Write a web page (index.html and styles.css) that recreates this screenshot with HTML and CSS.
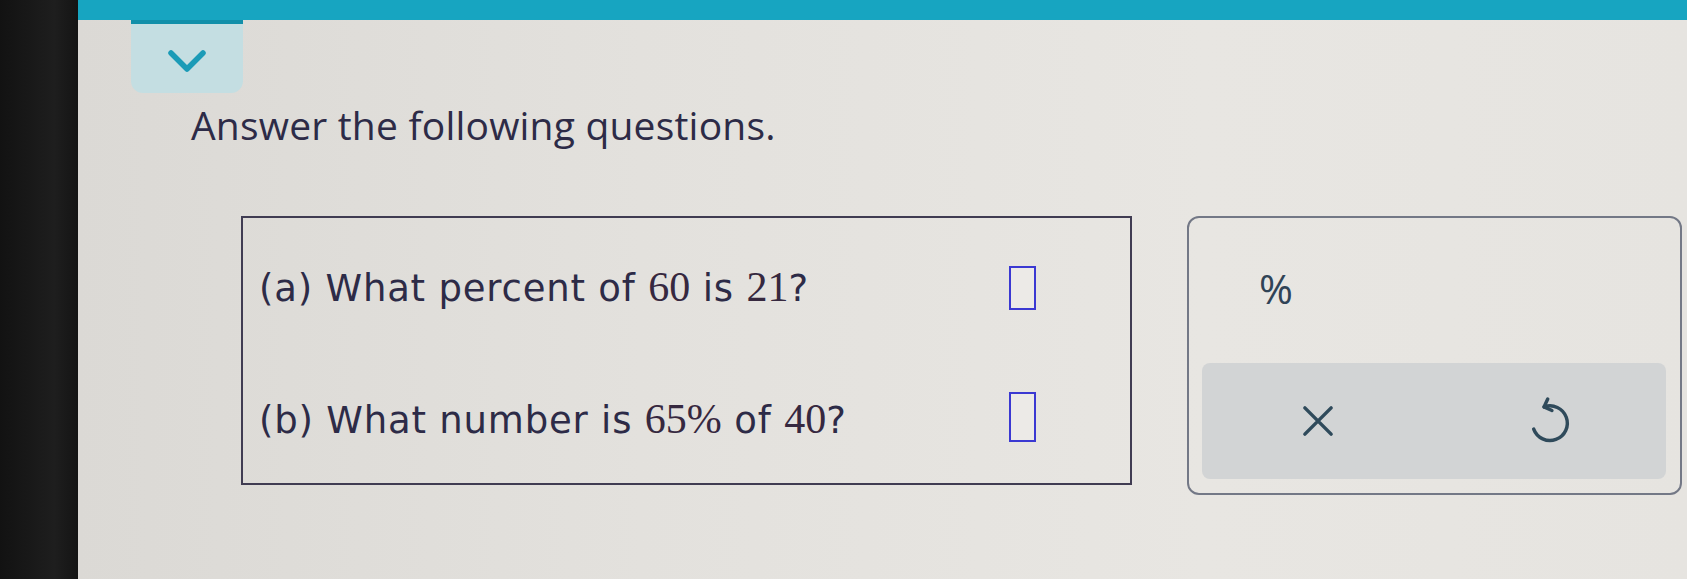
FILE: index.html
```
<!DOCTYPE html>
<html lang="en">

<head>
    <meta charset="utf-8">
    <meta name="viewport" content="width=device-width, initial-scale=1.0">
    <title>Answer the following questions</title>
    <link rel="stylesheet" href="styles.css">
</head>

<body>
    <div class="bezel"></div>

    <div class="screen">
        <div class="topbar"></div>

        <div class="content">
            <button class="collapse" aria-label="Collapse">
                <svg width="40" height="24" viewBox="0 0 40 24">
                    <polyline points="4,4 20,20 36,4" fill="none" stroke="#1b9bb7" stroke-width="5.5"
                        stroke-linecap="round" stroke-linejoin="round" />
                </svg>
            </button>

            <h1 class="prompt">Answer the following questions.</h1>

            <div class="work">
                <section class="questions">
                    <div class="question">
                        <p class="q_text">(a) What percent of <span class="num">60</span> is <span class="num">21</span>?</p>
                        <span class="answer"></span>
                    </div>
                    <div class="question">
                        <p class="q_text">(b) What number is <span class="num">65%</span> of <span class="num">40</span>?</p>
                        <span class="answer tall"></span>
                    </div>
                </section>

                <section class="keypad">
                    <div class="units">
                        <button class="unit">%</button>
                    </div>
                    <div class="actions">
                        <button class="action" aria-label="Clear">
                            <svg width="42" height="42" viewBox="0 0 24 24">
                                <path d="M4.5 4.5 L19.5 19.5 M19.5 4.5 L4.5 19.5" fill="none" stroke="#2f4a5b"
                                    stroke-width="2" stroke-linecap="round" />
                            </svg>
                        </button>
                        <button class="action" aria-label="Undo">
                            <svg width="52" height="52" viewBox="0 0 24 24">
                                <path d="M9.26 5.48 A8 8 0 1 1 4.48 15.74" fill="none" stroke="#2f4a5b"
                                    stroke-width="1.6" stroke-linecap="round" />
                                <path d="M10.95 1.85 L9.26 5.48 L12.89 7.17" fill="none" stroke="#2f4a5b"
                                    stroke-width="1.6" stroke-linecap="round" stroke-linejoin="round" />
                            </svg>
                        </button>
                    </div>
                </section>
            </div>
        </div>
    </div>
</body>

</html>
```

FILE: styles.css
```
body {
    margin: 0;
    height: 579px;
    overflow: hidden;
    display: flex;
    background-color: #161616;
}

.bezel {
    width: 78px;
    flex-shrink: 0;
    background: linear-gradient(90deg, #121212, #1e1e1e 70%, #141414);
}

.screen {
    flex: 1;
    background: linear-gradient(90deg, #dbd9d5, #e3e1dd 35%, #e8e6e2 70%, #e6e4e0);
}

.topbar {
    height: 20px;
    background-color: #17a5c1;
}

.content {
    display: flex;
    flex-direction: column;
    align-items: flex-start;
}

.collapse {
    margin-left: 53px;
    width: 112px;
    height: 73px;
    border: none;
    border-top: 4px solid #118fa9;
    border-radius: 0 0 12px 12px;
    background-color: #c4dee2;
    display: flex;
    justify-content: center;
    align-items: flex-start;
    padding: 25px 0 0;
    box-sizing: border-box;
}

.prompt {
    margin: 8px 0 0 113px;
    font-family: "Open Sans", sans-serif;
    font-size: 39px;
    font-weight: 400;
    line-height: 48px;
    letter-spacing: 0.2px;
    color: #2d2b47;
}

.work {
    display: flex;
    gap: 55px;
    margin: 67px 0 0 163px;
}

.questions {
    width: 891px;
    height: 269px;
    box-sizing: border-box;
    border: 2px solid #403c52;
    padding: 40px 0 0 16px;
    display: flex;
    flex-direction: column;
    gap: 72px;
}

.question {
    display: flex;
    align-items: center;
    height: 60px;
}

.q_text {
    margin: 0;
    width: 750px;
    font-family: "DejaVu Sans", Verdana, sans-serif;
    font-size: 37px;
    line-height: 60px;
    letter-spacing: 0.8px;
    color: #2d2b47;
    white-space: nowrap;
}

.num {
    font-family: "Liberation Serif", serif;
    font-size: 42px;
    letter-spacing: 0;
    color: #36283f;
}

.answer {
    width: 27px;
    height: 44px;
    box-sizing: border-box;
    border: 2px solid #3b39d2;
    background-color: #eceae7;
}

.answer.tall {
    height: 50px;
    margin-top: -6px;
}

.keypad {
    width: 495px;
    height: 279px;
    box-sizing: border-box;
    border: 2px solid #737886;
    border-radius: 12px;
    padding: 0 14px 14px 13px;
    display: flex;
    flex-direction: column;
}

.units {
    height: 145px;
    display: flex;
    align-items: center;
    padding-left: 57px;
}

.unit {
    border: none;
    background: none;
    padding: 0 0 6px;
    font-family: "Open Sans", sans-serif;
    font-size: 41px;
    color: #304356;
}

.actions {
    flex: 1;
    display: grid;
    grid-template-columns: 1fr 1fr;
    background-color: #d2d4d5;
    border-radius: 8px;
}

.action {
    border: none;
    background: none;
    display: flex;
    justify-content: center;
    align-items: center;
    padding: 0;
}
```
